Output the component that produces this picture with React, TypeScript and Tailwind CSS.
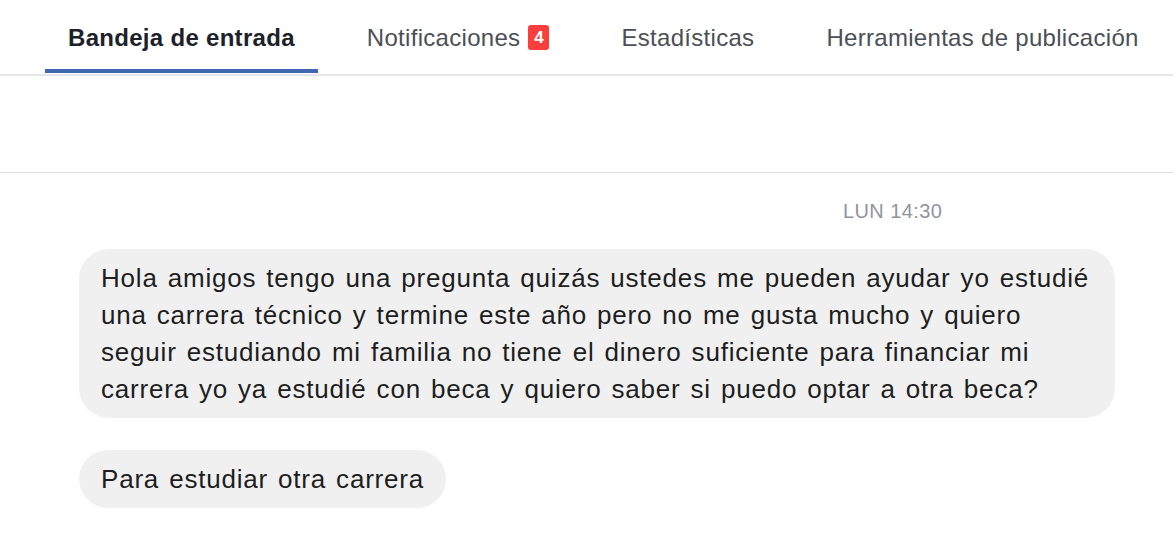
const tabs = [
  { label: 'Bandeja de entrada', active: true },
  { label: 'Notificaciones', badge: 4 },
  { label: 'Estadísticas' },
  { label: 'Herramientas de publicación' },
]

export default function App() {
  return (
    <div className="w-[1173px] h-[539px] bg-white overflow-hidden font-['Liberation_Sans',Arial,sans-serif]">
      <div className="flex h-[76px] border-b-2 border-[#e5e6e9] pl-[45px] gap-[26px]">
        {tabs.map((t) => (
          <div
            key={t.label}
            className={
              'relative flex items-center h-full px-[23px] pt-[1px] text-[24px] tracking-[0.3px] ' +
              (t.active ? 'font-bold text-[#1d2129]' : 'text-[#4b4f56]')
            }
          >
            <span>{t.label}</span>
            {t.badge && (
              <span className="ml-[8px] flex items-center justify-center w-[21px] h-[25px] rounded-[3px] bg-[#fa3e3e] text-white text-[17px] font-bold tracking-normal">
                {t.badge}
              </span>
            )}
            {t.active && <div className="absolute left-0 right-0 bottom-[1px] h-[4px] bg-[#4267b2]" />}
          </div>
        ))}
      </div>

      <div className="h-[97px] border-b border-[#dddfe2]" />

      <div className="pt-[26px] pl-[843px] text-[20px] leading-[24px] tracking-[0.4px] text-[#90949c]">LUN 14:30</div>

      <div className="flex flex-col items-start gap-[32px] pl-[79px] pt-[26px]">
        <div className="max-w-[1036px] rounded-[30px] bg-[#f1f0f0] px-[22px] pt-[11px] pb-[10px] text-[26px] leading-[37px] tracking-[0.8px] [word-spacing:2px] text-[#1c1e21]">
          Hola amigos tengo una pregunta quizás ustedes me pueden ayudar yo estudié una carrera técnico y termine este año pero no me gusta mucho y quiero seguir estudiando mi familia no tiene el dinero suficiente para financiar mi carrera yo ya estudié con beca y quiero saber si puedo optar a otra beca?
        </div>
        <div className="rounded-full bg-[#f1f0f0] px-[22px] pt-[11px] pb-[10px] text-[26px] leading-[37px] tracking-[0.8px] [word-spacing:2px] text-[#1c1e21]">
          Para estudiar otra carrera
        </div>
      </div>
    </div>
  )
}
